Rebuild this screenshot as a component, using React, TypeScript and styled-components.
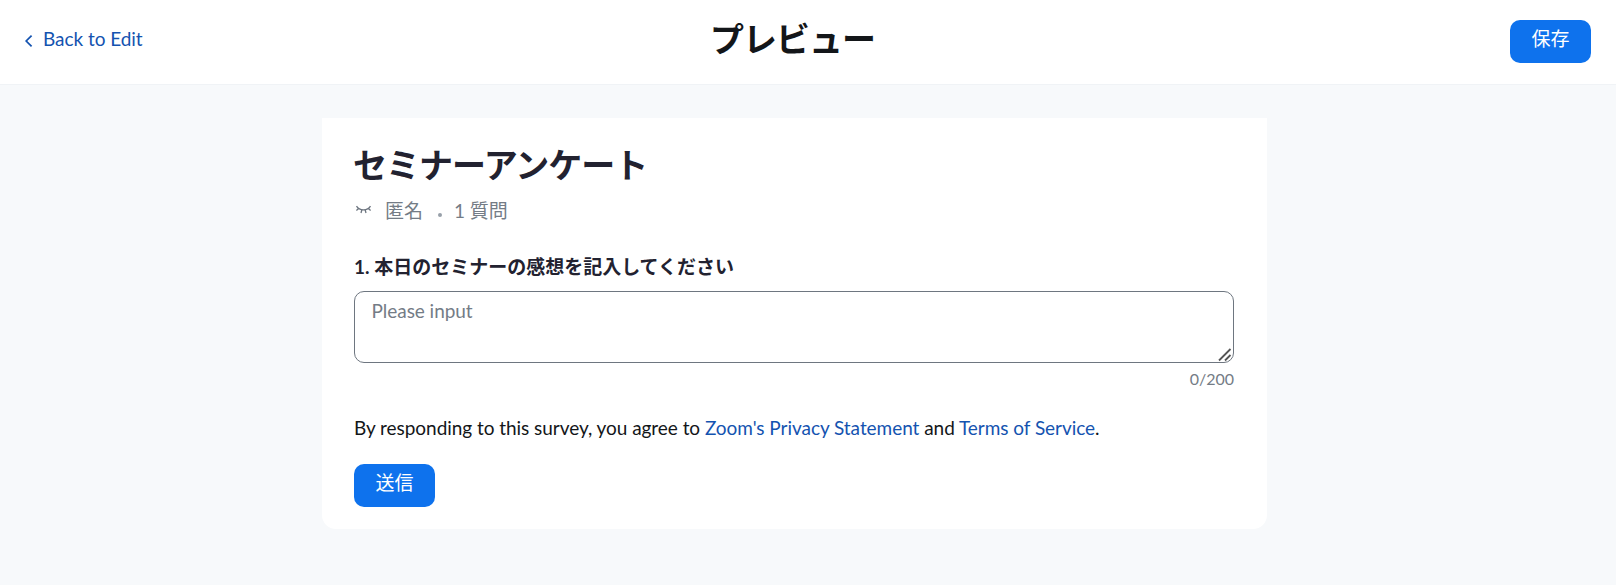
import React from 'react';
import styled, { createGlobalStyle } from 'styled-components';

const Global = createGlobalStyle`
  * { box-sizing: border-box; }
  body { margin: 0; background: #f7f9fb; font-family: Lato, "Noto Sans CJK JP", sans-serif; font-size: 19px; letter-spacing: -0.045px; color: #222230; }
`;
const Header = styled.header`
  display: grid; grid-template-columns: 1fr auto 1fr; align-items: start;
  height: 85px; padding: 20px 25px 0 24px; background: #fff; border-bottom: 1px solid #f0f3f6;
`;
const Back = styled.a`
  display: flex; align-items: center; gap: 9px; color: #1453b0; line-height: 24px; margin-top: 7px;
`;
const BackIcon = styled.svg`
  margin-top: 3px;
`;
const Title = styled.h1`
  margin: -3px 30px 0 0; font-size: 34px; line-height: 44px; font-weight: 700; letter-spacing: -1px; color: #131619;
`;
const Button = styled.button`
  display: block; width: 81px; height: 43px; margin-left: auto; padding: 0 0 6px; border: 0; border-radius: 10px;
  background: #0e72ed; color: #fff; font: inherit; line-height: 24px;
`;
const SubmitButton = styled(Button)`
  margin-left: 0;
`;
const Card = styled.main`
  width: 945px; height: 411px; margin: 33px 0 0 322px; padding: 25px 33px 0 32px;
  background: #fff; border-radius: 0 0 14px 14px;
`;
const SurveyTitle = styled.h2`
  margin: 0 0 0 -1px; font-size: 34px; line-height: 44px; font-weight: 700; letter-spacing: -1px;
`;
const Meta = styled.div`
  display: flex; align-items: center; height: 28px; margin: 8px 0 30px; color: #747c86;
`;
const EyeIcon = styled.svg`
  margin-top: 2px;
`;
const Anonymous = styled.span`margin-left: 13px;`;
const Dot = styled.i`
  width: 4px; height: 4px; border-radius: 50%; background: #98a0a9; margin: 11px 12px 0 15px;
`;
const Question = styled.div`
  line-height: 28px; font-weight: 700; letter-spacing: 0;
`;
const FieldWrap = styled.div`
  position: relative; margin-top: 10px;
`;
const Field = styled.textarea`
  display: block; width: 880px; height: 72px; padding: 6px 16.5px; border: 1px solid #6e7680;
  border-radius: 10px; font: inherit; letter-spacing: inherit; line-height: 26px; resize: none;
  &::placeholder { color: #747c86; }
`;
const Grip = styled.svg`
  position: absolute; right: 2px; bottom: 1px;
`;
const Counter = styled.div`
  text-align: right; font-size: 16px; line-height: 20px; margin-top: 6px; letter-spacing: 0; color: #747c86;
`;
const Consent = styled.p`
  margin: 25px 0 22px; line-height: 28px; color: #131619;
`;
const Link = styled.a`color: #1453b0;`;

export default function App() {
  return (
    <>
      <Global />
      <Header>
        <Back>
          <BackIcon width="10" height="14" viewBox="0 0 10 14" fill="none" stroke="#1453b0" strokeWidth="1.7"><path d="M7.6 1.6 2.2 7l5.4 5.4" /></BackIcon>
          Back to Edit
        </Back>
        <Title>プレビュー</Title>
        <Button>保存</Button>
      </Header>
      <Card>
        <SurveyTitle>セミナーアンケート</SurveyTitle>
        <Meta>
          <EyeIcon width="18" height="10" viewBox="0 0 18 10" fill="none" stroke="#6e7680" strokeWidth="1.3"><path d="M2.5 1.2c3 5 11 5 14 0M4.6 3.5 2.4 5.5M7.8 5 7 8M11.2 5l.8 3M14.4 3.5l2.2 2" /></EyeIcon>
          <Anonymous>匿名</Anonymous><Dot />1 質問
        </Meta>
        <Question>1. 本日のセミナーの感想を記入してください</Question>
        <FieldWrap>
          <Field placeholder="Please input" />
          <Grip width="14" height="14" viewBox="0 0 14 14" fill="none" stroke="#555" strokeWidth="1.8"><path d="M1 12.5 12.5 1M7 12.5 12.5 7" /></Grip>
        </FieldWrap>
        <Counter>0/200</Counter>
        <Consent>By responding to this survey, you agree to <Link>Zoom's Privacy Statement</Link> and <Link>Terms of Service</Link>.</Consent>
        <SubmitButton>送信</SubmitButton>
      </Card>
    </>
  );
}
